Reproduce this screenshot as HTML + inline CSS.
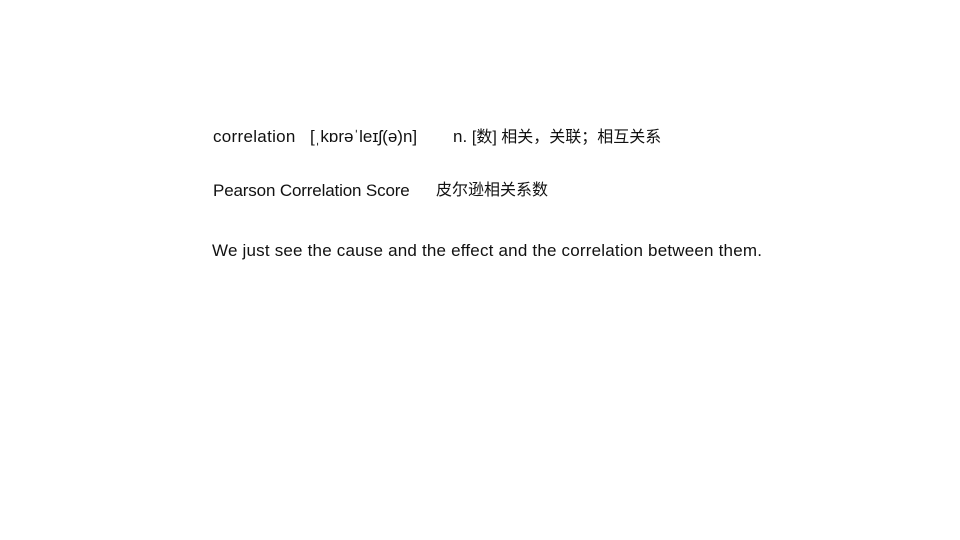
<!DOCTYPE html>
<html><head><meta charset="utf-8"><style>
body{margin:0;width:960px;height:540px;background:#fff;position:relative;font-family:"Liberation Sans","Noto Sans CJK SC",sans-serif;color:#111;font-size:17px}
div{position:absolute;white-space:nowrap;line-height:20px}
.c{font-size:16px;letter-spacing:0}
</style></head><body>
<div style="left:213px;top:127px;letter-spacing:0.3px">correlation</div>
<div style="left:310px;top:127px">[ˌkɒrəˈleɪʃ(ə)n]</div>
<div style="left:453px;top:127px">n. <span class="c">[数] 相关，关联；相互关系</span></div>
<div style="left:213px;top:181px;letter-spacing:-0.15px">Pearson Correlation Score</div>
<div class="c" style="left:436px;top:181px">皮尔逊相关系数</div>
<div style="left:212px;top:241px;letter-spacing:0.2px">We just see the cause and the effect and the correlation between them.</div>
</body></html>
